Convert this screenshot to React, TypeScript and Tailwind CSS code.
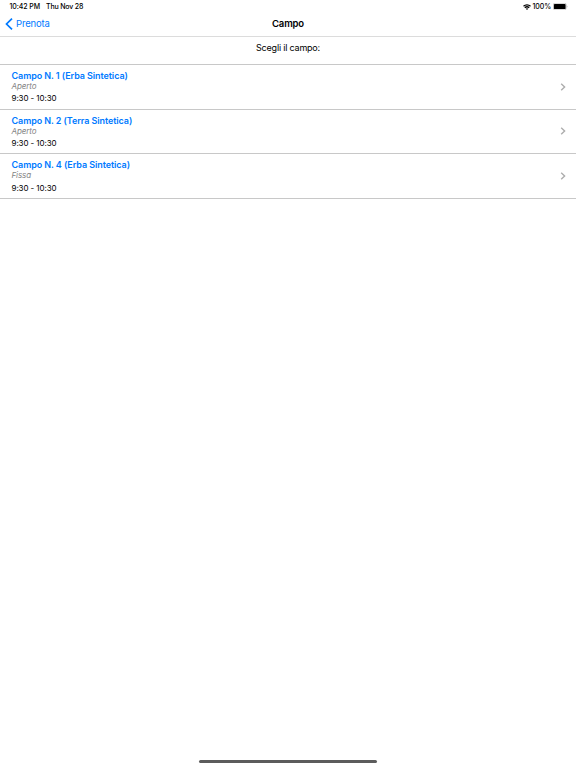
const courts = [
  { name: "Campo N. 1 (Erba Sintetica)", status: "Aperto", time: "9:30 - 10:30" },
  { name: "Campo N. 2 (Terra Sintetica)", status: "Aperto", time: "9:30 - 10:30" },
  { name: "Campo N. 4 (Erba Sintetica)", status: "Fissa", time: "9:30 - 10:30" },
];

function StatusBar() {
  return (
    <div className="flex h-[14px] items-center justify-between pl-[9.5px] pr-[8px] text-[7px] font-medium leading-[14px]">
      <div className="flex gap-[6px] tracking-[-0.18px]">
        <span className="tracking-[-0.08px]">10:42 PM</span>
        <span>Thu Nov 28</span>
      </div>
      <div className="flex items-center">
        <svg className="mr-[2px] h-[6px] w-[8px]" viewBox="0 0 16 12" fill="none" stroke="#000" strokeWidth="2.5">
          <path d="M1 4.6a10 10 0 0 1 14 0" />
          <path d="M3.6 7.6a6.3 6.3 0 0 1 8.8 0" />
          <path d="M8 12 5.6 9.5a3.4 3.4 0 0 1 4.8 0z" fill="#000" stroke="none" />
        </svg>
        <span className="tracking-[-0.1px]">100%</span>
        <svg className="mb-px ml-[2px] h-[7px] w-[15px]" viewBox="0 0 15 7">
          <rect x="0.25" y="0.25" width="13" height="6.5" rx="1.6" fill="#fff" stroke="#999" strokeWidth="0.5" />
          <rect x="0.9" y="0.9" width="11.7" height="5.2" rx="0.9" fill="#000" />
          <path d="M13.8 2.4c.8.3.8 1.9 0 2.2z" fill="#999" />
        </svg>
      </div>
    </div>
  );
}

function NavBar() {
  return (
    <div className="grid h-[23px] grid-cols-3 items-center border-b border-[#dcdcdc] pb-[2px]">
      <button className="flex items-center pl-[5px] text-left text-[9.5px] leading-[14px] tracking-[-0.18px] text-[#007aff]">
        <svg className="mr-[3px] h-[12px] w-[8px]" viewBox="0 0 8 12" fill="none" stroke="currentColor" strokeWidth="1.7">
          <path d="M7 0.6 1.5 6 7 11.4" />
        </svg>
        Prenota
      </button>
      <h1 className="text-center text-[9.5px] font-semibold leading-[14px] tracking-[-0.14px]">Campo</h1>
    </div>
  );
}

export default function App() {
  return (
    <div className="flex h-screen w-full flex-col overflow-hidden bg-white font-[Inter,sans-serif] text-black">
      <StatusBar />
      <NavBar />
      <p className="h-[28px] border-b border-[#c8c8c8] pt-[4px] text-center text-[9px] leading-[14px] tracking-[-0.2px]">
        Scegli il campo:
      </p>
      <ul>
        {courts.map((court) => (
          <li
            key={court.name}
            className="flex h-[44.67px] items-center justify-between border-b border-[#c8c8c8] pl-[11.5px] pr-[10px]"
          >
            <div className="pt-[0.6px]">
              <div className="text-[9px] font-semibold leading-[11px] tracking-[-0.08px] text-[#007aff]">
                {court.name}
              </div>
              <div className="text-[8px] italic leading-[10px] tracking-[-0.1px] text-[#858585]">{court.status}</div>
              <div className="mt-[2.3px] text-[8px] leading-[11px] tracking-[-0.08px]">{court.time}</div>
            </div>
            <svg className="h-[8px] w-[6px]" viewBox="0 0 6 8" fill="none" stroke="#adadad" strokeWidth="1.4">
              <path d="M1.2 0.8 4.6 4 1.2 7.2" />
            </svg>
          </li>
        ))}
      </ul>
      <div className="mx-auto mb-[5px] mt-auto h-[3px] w-[178px] rounded-full bg-[#5c5c5c]" />
    </div>
  );
}
